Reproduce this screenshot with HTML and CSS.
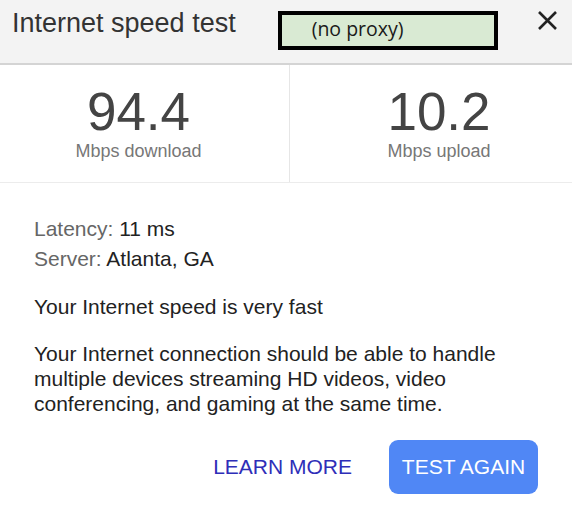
FILE: index.html
```html
<!DOCTYPE html>
<html lang="en">
<head>
  <meta charset="UTF-8" />
  <meta name="viewport" content="width=device-width, initial-scale=1.0"/>
  <title>Internet speed test</title>
  <link rel="stylesheet" href="styles.css">
</head>
<body>

  <header class="top">
    <h1>Internet speed test</h1>
    <div class="proxy">(no proxy)</div>
    <button class="close" aria-label="Close">
      <svg width="21" height="21" viewBox="0 0 21 21">
        <path d="M2 2 L19 19 M19 2 L2 19" stroke="#222" stroke-width="2.6" fill="none"/>
      </svg>
    </button>
  </header>

  <section class="stats">
    <div class="stat down">
      <div class="value">94.4</div>
      <div class="unit">Mbps download</div>
    </div>
    <div class="stat up">
      <div class="value">10.2</div>
      <div class="unit">Mbps upload</div>
    </div>
  </section>

  <section class="details">
    <div class="meta">
      <div><span class="key">Latency:</span> 11 ms</div>
      <div><span class="key">Server:</span> Atlanta, GA</div>
    </div>

    <p class="verdict">Your Internet speed is very fast</p>

    <p class="summary">Your Internet connection should be able to handle multiple devices streaming HD videos, video conferencing, and gaming at the same time.</p>

    <div class="actions">
      <a class="learn" href="#">LEARN MORE</a>
      <button class="again">TEST AGAIN</button>
    </div>
  </section>

</body>
</html>
```

FILE: styles.css
```css
body {
  font-family: 'Liberation Sans', Arial, sans-serif;
  background-color: #ffffff;
  color: #222;
  margin: 0;
}

.top {
  display: flex;
  align-items: flex-start;
  height: 63px;
  padding: 0 14px 0 12px;
  background-color: #f3f3f3;
  border-bottom: 2px solid #d4d4d4;
}

.top h1 {
  margin: 7px 0 0;
  font-size: 27px;
  font-weight: normal;
  line-height: 32px;
  color: #333;
}

.proxy {
  width: 182px;
  height: 31px;
  margin: 11px 0 0 42px;
  padding-left: 30px;
  border: 4px solid #000;
  background-color: #d9ead3;
  font-family: 'Open Sans', sans-serif;
  font-size: 19.5px;
  line-height: 28px;
  color: #1a1a1a;
}

.close {
  margin: 10px 0 0 auto;
  padding: 0;
  border: none;
  background: none;
  width: 21px;
  height: 21px;
  cursor: pointer;
}

.close svg {
  display: block;
}

.stats {
  display: flex;
  border-bottom: 1px solid #ececec;
}

.stat {
  text-align: center;
  padding: 19px 0 20px;
}

.down {
  width: 277px;
  padding-right: 12px;
  border-right: 1px solid #e6e6e6;
}

.up {
  flex: 1;
  padding-left: 16px;
}

.value {
  font-size: 53px;
  line-height: 56px;
  color: #444;
}

.unit {
  font-size: 18px;
  line-height: 22px;
  color: #777;
}

.details {
  padding: 31px 34px 0;
  font-size: 21px;
}

.meta {
  line-height: 30px;
  color: #222;
}

.key {
  color: #666;
}

.verdict {
  margin: 20px 0 0;
  line-height: 25px;
  color: #222;
}

.summary {
  margin: 22px 0 0;
  line-height: 25px;
  color: #222;
}

.actions {
  display: flex;
  justify-content: flex-end;
  align-items: center;
  gap: 37px;
  margin-top: 24px;
}

.learn {
  color: #2e2eb8;
  text-decoration: none;
  font-size: 21px;
}

.again {
  width: 149px;
  height: 54px;
  border: none;
  border-radius: 9px;
  background-color: #5087f5;
  color: #fff;
  font-family: inherit;
  font-size: 21px;
  cursor: pointer;
}
```
